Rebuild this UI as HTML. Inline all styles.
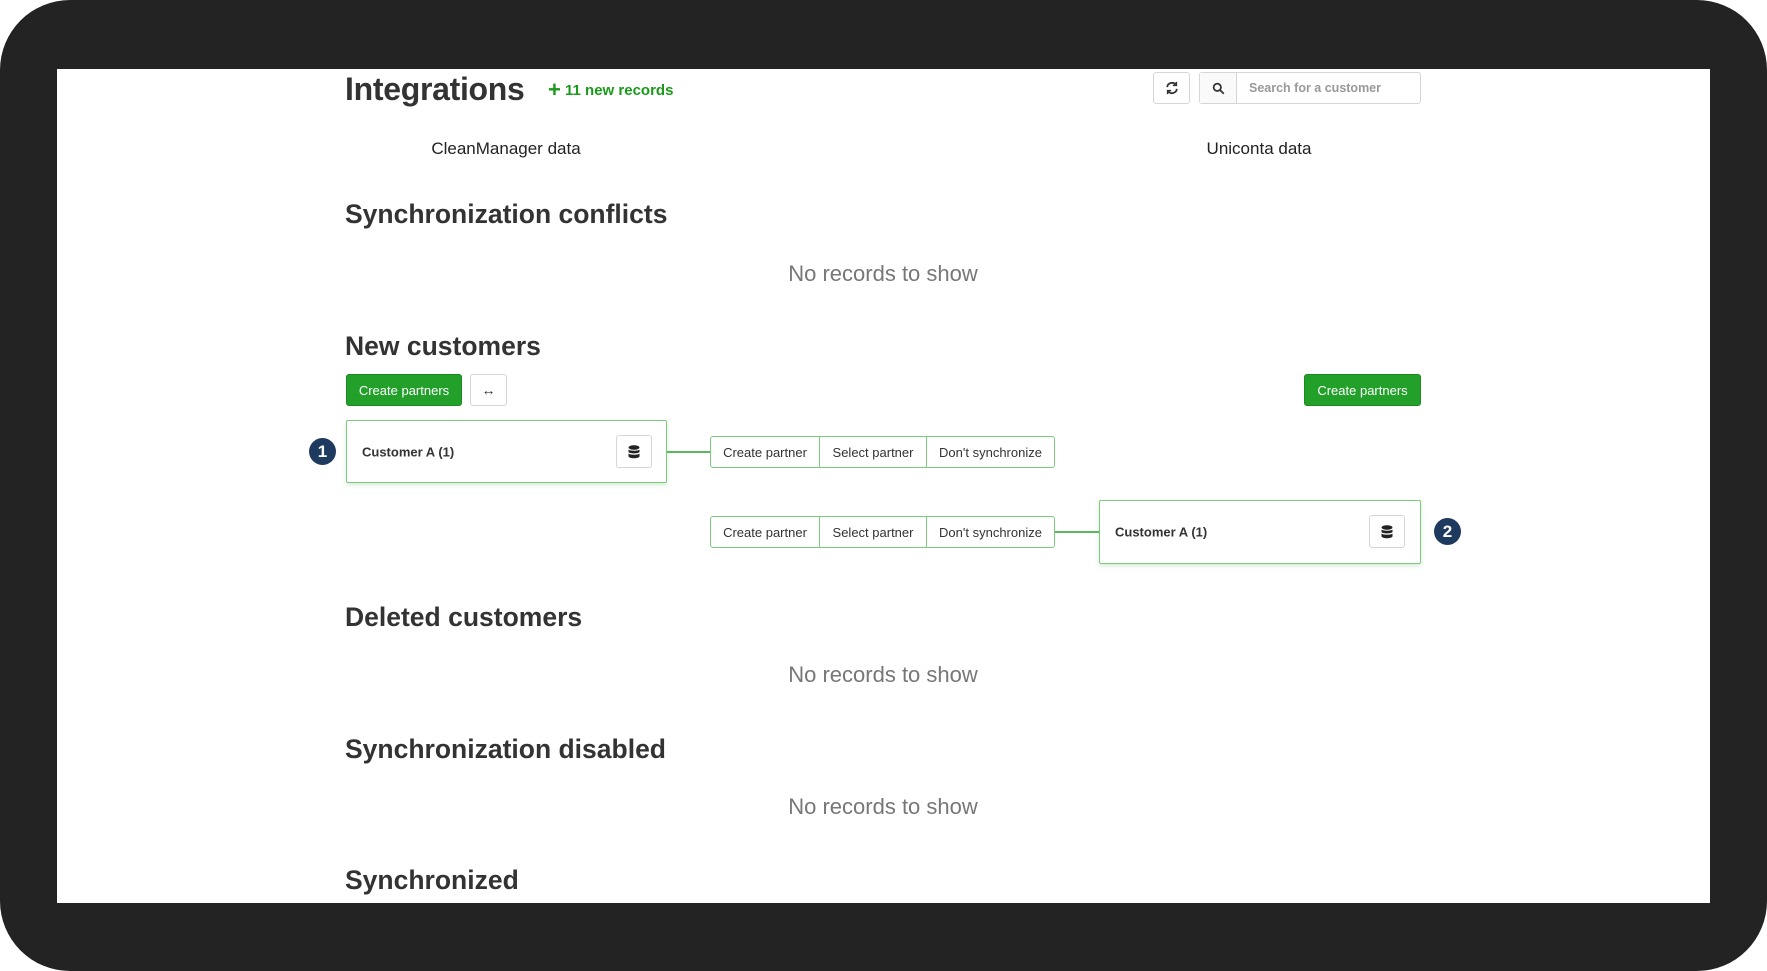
<!DOCTYPE html>
<html><head><meta charset="utf-8"><style>
*{box-sizing:border-box;margin:0;padding:0}
html,body{width:1767px;height:971px;background:#fff;overflow:hidden;font-family:"Liberation Sans",Arial,sans-serif;color:#333}
.frame{position:absolute;left:0;top:0;width:1767px;height:971px;background:#232323;border-radius:70px}
.page{position:absolute;left:57px;top:69px;width:1653px;height:834px;background:#fff;overflow:hidden}
.a{position:absolute;white-space:nowrap}
h2{position:absolute;font-size:26.5px;font-weight:bold;color:#333;white-space:nowrap;line-height:1}
.none{position:absolute;width:400px;text-align:center;font-size:22px;color:#777;line-height:1}
.btn{position:absolute;border:1px solid #d6d6d6;border-radius:3px;background:#fff;display:flex;align-items:center;justify-content:center}
.green{position:absolute;background:#22a02a;border:1px solid #1c8a22;border-radius:3px;color:#fff;font-size:13px;display:flex;align-items:center;justify-content:center}
.card{position:absolute;border:1px solid #7cc97f;border-radius:2px;background:#fff;box-shadow:0 2px 4px rgba(80,180,80,.25)}
.card span{position:absolute;left:15px;top:50%;transform:translateY(-50%);font-size:13px;font-weight:bold;color:#333}
.grp{position:absolute;border:1px solid #7cc97f;border-radius:3px;display:flex;height:32px;background:#fff}
.grp div{display:flex;align-items:center;justify-content:center;font-size:13px;color:#333;border-right:1px solid #7cc97f}
.grp div:last-child{border-right:none}
.line{position:absolute;height:2px;background:#5cb85c}
.badge{position:absolute;width:27px;height:27px;border-radius:50%;background:#1f3a5f;color:#fff;font-weight:bold;font-size:17px;display:flex;align-items:center;justify-content:center}
</style></head><body>
<div class="frame"></div>
<div class="page">
<div style="position:absolute;left:-57px;top:-69px;width:1767px;height:971px">
<div class="a" style="left:345px;top:71px;font-size:32px;font-weight:bold;color:#333;letter-spacing:-0.3px">Integrations</div>
<div class="a" style="left:548px;top:77px;font-size:15px;font-weight:bold;color:#1a9a1a"><span style="font-size:22px;vertical-align:-2px">+</span> 11 new records</div>
<div class="btn" style="left:1153px;top:72px;width:37px;height:32px"><svg width="14" height="14" viewBox="0 0 16 16" fill="none" stroke="#333" stroke-width="2"><path d="M2.5 7A5.5 5.5 0 0 1 12.5 4.5M13.5 9A5.5 5.5 0 0 1 3.5 11.5"/><path d="M13 1v4h-4M3 15v-4h4" stroke-width="1.8"/></svg></div>
<div class="btn" style="left:1199px;top:72px;width:222px;height:32px;justify-content:flex-start">
<div style="width:37px;height:30px;border-right:1px solid #d6d6d6;background:#fafafa;display:flex;align-items:center;justify-content:center"><svg width="13" height="13" viewBox="0 0 16 16" fill="none" stroke="#333" stroke-width="2.2"><circle cx="6.5" cy="6.5" r="4.5"/><path d="M10 10l4.5 4.5"/></svg></div>
<span style="font-size:12.5px;font-weight:bold;color:#999;margin-left:12px">Search for a customer</span></div>
<div class="a" style="left:406px;top:139px;width:200px;text-align:center;font-size:17px;color:#222">CleanManager data</div>
<div class="a" style="left:1159px;top:139px;width:200px;text-align:center;font-size:17px;color:#222">Uniconta data</div>
<h2 style="left:345px;top:201px">Synchronization conflicts</h2>
<div class="none" style="left:683px;top:263px">No records to show</div>
<h2 style="left:345px;top:333px">New customers</h2>
<div class="green" style="left:346px;top:374px;width:116px;height:32px">Create partners</div>
<div class="btn" style="left:470px;top:374px;width:37px;height:32px;font-size:14px;font-weight:bold">↔</div>
<div class="green" style="left:1304px;top:374px;width:117px;height:32px">Create partners</div>
<div class="badge" style="left:309px;top:438px">1</div>
<div class="card" style="left:346px;top:420px;width:321px;height:63px"><span>Customer A (1)</span>
<div class="btn" style="left:269px;top:14px;width:36px;height:33px"><svg width="12" height="14" viewBox="0 0 12 14" fill="#222"><ellipse cx="6" cy="2.5" rx="5.5" ry="2.3"/><path d="M.5 4.5c1 1.6 10 1.6 11 0v2.5c-1 1.8-10 1.8-11 0zM.5 8.5c1 1.6 10 1.6 11 0v3c-1 2.3-10 2.3-11 0z"/></svg></div></div>
<div class="line" style="left:667px;top:451px;width:43px"></div>
<div class="grp" style="left:710px;top:436px;width:345px"><div style="width:109px">Create partner</div><div style="width:107px">Select partner</div><div style="flex:1">Don't synchronize</div></div>
<div class="grp" style="left:710px;top:516px;width:345px"><div style="width:109px">Create partner</div><div style="width:107px">Select partner</div><div style="flex:1">Don't synchronize</div></div>
<div class="line" style="left:1055px;top:531px;width:44px"></div>
<div class="card" style="left:1099px;top:500px;width:322px;height:64px"><span>Customer A (1)</span>
<div class="btn" style="left:269px;top:14px;width:36px;height:33px"><svg width="12" height="14" viewBox="0 0 12 14" fill="#222"><ellipse cx="6" cy="2.5" rx="5.5" ry="2.3"/><path d="M.5 4.5c1 1.6 10 1.6 11 0v2.5c-1 1.8-10 1.8-11 0zM.5 8.5c1 1.6 10 1.6 11 0v3c-1 2.3-10 2.3-11 0z"/></svg></div></div>
<div class="badge" style="left:1434px;top:518px">2</div>
<h2 style="left:345px;top:604px">Deleted customers</h2>
<div class="none" style="left:683px;top:664px">No records to show</div>
<h2 style="left:345px;top:736px">Synchronization disabled</h2>
<div class="none" style="left:683px;top:796px">No records to show</div>
<h2 style="left:345px;top:867px">Synchronized</h2>
</div>
</div>
</body></html>
